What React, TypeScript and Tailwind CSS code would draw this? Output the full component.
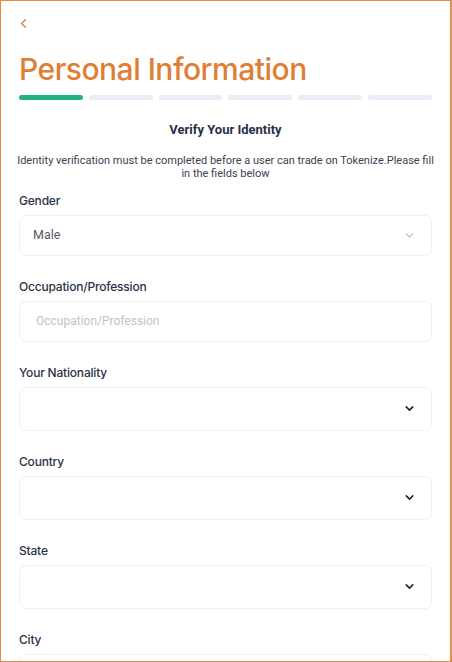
import { ChevronLeft, ChevronDown } from 'lucide-react';

const steps = [true, false, false, false, false, false];

function Label({ children }: { children: string }) {
  return (
    <div className="text-[12px] leading-4 font-medium tracking-[-0.2px] text-[#2c3148] font-['Inter',sans-serif] mb-[6px]">
      {children}
    </div>
  );
}

function SelectBox({ value, light, tall = true }: { value?: string; light?: boolean; tall?: boolean }) {
  return (
    <div
      className={`flex items-center justify-between rounded-[7px] border border-[#eef0f4] bg-white pl-[13px] pr-[15px] ${
        tall ? 'h-[44px]' : 'h-[41px]'
      }`}
    >
      <span className="text-[12.5px] text-[#555a66] font-['Roboto',sans-serif]">{value}</span>
      {light ? (
        <ChevronDown className="w-[13px] h-[13px] text-[#b5b9c2]" strokeWidth={2} />
      ) : (
        <ChevronDown className="w-[13px] h-[13px] text-[#22263a]" strokeWidth={3} />
      )}
    </div>
  );
}

export default function App() {
  return (
    <div className="w-[452px] h-[662px] overflow-hidden bg-white border border-[#e08c4a] border-r-2">
      <div className="px-[18px]">
        {/* Back */}
        <div className="pt-[15px] h-[40px]">
          <ChevronLeft className="w-[15px] h-[15px] -ml-[3px] text-[#c9873f]" strokeWidth={2} />
        </div>

        {/* Title */}
        <h1 className="mt-[9px] text-[30px] leading-[38px] font-medium tracking-[-0.5px] text-[#df7f36] font-['Inter',sans-serif]">
          Personal Information
        </h1>

        {/* Progress */}
        <div className="mt-[7px] flex gap-[6px]">
          {steps.map((done, i) => (
            <div
              key={i}
              className={`h-[5px] flex-1 rounded-full ${done ? 'bg-[#1fb287]' : 'bg-[#e9edf5]'}`}
            />
          ))}
        </div>

        {/* Intro */}
        <div className="mt-[20px] text-center text-[13px] font-bold text-[#2a2f4a] font-['Roboto',sans-serif]">
          Verify Your Identity
        </div>
        <p className="mt-[14px] -mx-[3px] text-center text-[11px] leading-[13px] text-[#3d4150] font-['Roboto',sans-serif]">
          Identity verification must be completed before a user can trade on Tokenize.Please fill in the fields below
        </p>

        {/* Fields */}
        <div className="mt-[13px]">
          <Label>Gender</Label>
          <SelectBox value="Male" light tall={false} />
        </div>

        <div className="mt-[23px]">
          <Label>Occupation/Profession</Label>
          <div className="flex items-center h-[41px] rounded-[7px] border border-[#eef0f4] pl-[16px]">
            <span className="text-[12px] text-[#bfc3cc] font-['Roboto',sans-serif]">Occupation/Profession</span>
          </div>
        </div>

        <div className="mt-[23px]">
          <Label>Your Nationality</Label>
          <SelectBox />
        </div>

        <div className="mt-[23px]">
          <Label>Country</Label>
          <SelectBox />
        </div>

        <div className="mt-[23px]">
          <Label>State</Label>
          <SelectBox />
        </div>

        <div className="mt-[23px]">
          <Label>City</Label>
          <SelectBox />
        </div>
      </div>
    </div>
  );
}
